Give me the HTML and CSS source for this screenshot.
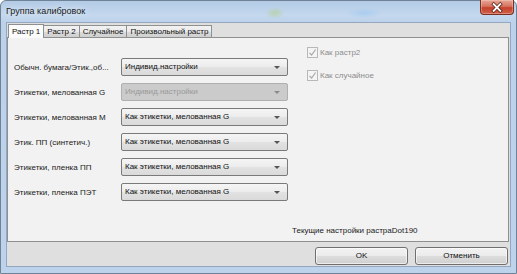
FILE: index.html
```html
<!DOCTYPE html>
<html lang="ru">
<head>
<meta charset="utf-8">
<title>Группа калибровок</title>
<link rel="stylesheet" href="styles.css">
</head>
<body>
<div class="window">
  <div class="titlebar">
    <span class="title">Группа калибровок</span>
    <div class="close">
      <svg width="34" height="15" viewBox="0 0 34 15">
        <path d="M13.5 4 L20.5 11 M20.5 4 L13.5 11" stroke="#5a1f16" stroke-width="3.6" stroke-linecap="square"/>
        <path d="M13.5 4 L20.5 11 M20.5 4 L13.5 11" stroke="#ffffff" stroke-width="2" stroke-linecap="square"/>
      </svg>
    </div>
  </div>
  <div class="client">
    <div class="tabctl">
      <div class="tabstrip">
        <div class="tab active">Растр 1</div>
        <div class="tab">Растр 2</div>
        <div class="tab">Случайное</div>
        <div class="tab">Произвольный растр</div>
      </div>
      <div class="panel">
        <div class="rows">
          <div class="row"><span class="label">Обычн. бумага/Этик.,об...</span><div class="combo">Индивид.настройки<i class="arrow"></i></div></div>
          <div class="row"><span class="label">Этикетки, мелованная G</span><div class="combo disabled">Индивид.настройки<i class="arrow"></i></div></div>
          <div class="row"><span class="label">Этикетки, мелованная M</span><div class="combo">Как этикетки, мелованная G<i class="arrow"></i></div></div>
          <div class="row"><span class="label">Этик. ПП (синтетич.)</span><div class="combo">Как этикетки, мелованная G<i class="arrow"></i></div></div>
          <div class="row"><span class="label">Этикетки, пленка ПП</span><div class="combo">Как этикетки, мелованная G<i class="arrow"></i></div></div>
          <div class="row"><span class="label">Этикетки, пленка ПЭТ</span><div class="combo">Как этикетки, мелованная G<i class="arrow"></i></div></div>
        </div>
        <div class="side">
          <div class="checks">
            <label class="check"><span class="box"><svg width="9" height="9" viewBox="0 0 9 9"><path d="M1.5 4.8 L3.6 7 L7.6 1.5" fill="none" stroke="#a9a9a9" stroke-width="1.2"/></svg></span>Как растр2</label>
            <label class="check"><span class="box"><svg width="9" height="9" viewBox="0 0 9 9"><path d="M1.5 4.8 L3.6 7 L7.6 1.5" fill="none" stroke="#a9a9a9" stroke-width="1.2"/></svg></span>Как случайное</label>
          </div>
          <div class="current">Текущие настройки растраDot190</div>
        </div>
      </div>
    </div>
    <div class="buttons">
      <div class="btn">OK</div>
      <div class="btn">Отменить</div>
    </div>
  </div>
</div>
</body>
</html>
```
FILE: styles.css
```css
* { box-sizing: border-box; }
html, body { margin: 0; padding: 0; }
body {
  width: 517px;
  height: 274px;
  overflow: hidden;
  background: #ffffff;
  font-family: "Liberation Sans", Arial, sans-serif;
}
.window {
  width: 517px;
  height: 274px;
  display: flex;
  flex-direction: column;
  border: 1px solid #6f8296;
  border-radius: 6px 6px 0 0;
  background:
    radial-gradient(ellipse 10px 6px at 274px 12px, rgba(175,205,120,0.5), rgba(175,205,120,0) 100%),
    radial-gradient(ellipse 18px 5px at 363px 12px, rgba(160,200,240,0.7), rgba(160,200,240,0) 100%),
    linear-gradient(180deg, #b3cbe6 0px, #c4d8ee 14px, #bcd2ea 22px, #bdd3eb 100%);
  padding: 0 5px 6px 5px;
}
.titlebar {
  height: 21px;
  display: flex;
  align-items: flex-start;
  justify-content: space-between;
}
.title {
  font-size: 9px;
  color: #1b1b1b;
  padding: 5px 0 0 0;
  text-shadow: 0 0 6px rgba(255,255,255,0.9);
}
.close {
  width: 34px;
  height: 15px;
  margin-right: -3px;
  margin-top: -1px;
  border: 1px solid #7a2f24;
  border-top: none;
  border-radius: 0 0 4px 4px;
  background: linear-gradient(180deg, #e6a898 0%, #d7735f 45%, #c4412c 55%, #d2614a 100%);
  box-shadow: inset 0 0 0 1px rgba(255,220,210,0.35);
  display: flex;
}
.client {
  flex: 1;
  display: flex;
  flex-direction: column;
  background: #dfdfdf;
  border: 1px solid #93a7bf;
}
.tabctl {
  display: flex;
  flex-direction: column;
  padding: 0 1px 0 0;
}
.tabstrip {
  height: 14px;
  display: flex;
  align-items: flex-end;
  padding-left: 1px;
  position: relative;
  z-index: 1;
}
.tab {
  height: 12px;
  font-size: 8px;
  color: #111;
  padding: 0 3px;
  line-height: 11px;
  border: 1px solid #8e8f8f;
  border-bottom: none;
  border-left: none;
  background: linear-gradient(180deg, #f2f2f2 0%, #ebebeb 50%, #dcdcdc 51%, #cfcfcf 100%);
}
.tab.active {
  height: 14px;
  background: #fbfbfb;
  border-left: 1px solid #8e8f8f;
  margin-bottom: -1px;
  line-height: 13px;
}
.panel {
  height: 205px;
  background: #f2f2f2;
  border: 1px solid #8e8f8f;
  display: flex;
  padding: 20px 0 6px 6px;
}
.rows {
  display: flex;
  flex-direction: column;
  gap: 7px;
  width: 278px;
}
.row {
  display: flex;
  align-items: center;
  height: 18px;
}
.label {
  width: 107px;
  font-size: 8px;
  color: #1a1a1a;
  white-space: nowrap;
}
.combo {
  width: 167px;
  height: 18px;
  border: 1px solid #7a7a7a;
  border-radius: 2px;
  background: linear-gradient(180deg, #f5f5f5 0%, #ececec 50%, #e2e2e2 51%, #dadada 100%);
  font-size: 8px;
  color: #111;
  line-height: 16px;
  padding-left: 3px;
  position: relative;
}
.combo.disabled {
  background: #cbcbcb;
  border-color: #b0b0b0;
  color: #9a9a9a;
}
.arrow {
  position: absolute;
  right: 7px;
  top: 7px;
  width: 0;
  height: 0;
  border-left: 3px solid transparent;
  border-right: 3px solid transparent;
  border-top: 3px solid #555;
}
.combo.disabled .arrow { border-top-color: #8a8a8a; }
.side {
  flex: 1;
  display: flex;
  flex-direction: column;
  justify-content: space-between;
}
.checks {
  display: flex;
  flex-direction: column;
  gap: 12px;
  margin-top: -11px;
  padding-left: 15px;
}
.check {
  display: flex;
  align-items: center;
  gap: 2px;
  font-size: 8px;
  color: #8c8c8c;
  height: 11px;
}
.box {
  width: 11px;
  height: 11px;
  border: 1px solid #b8b8b8;
  background: #f4f4f4;
  display: flex;
  align-items: center;
  justify-content: center;
}
.current {
  font-size: 8px;
  color: #1a1a1a;
}
.buttons {
  flex: 1;
  display: flex;
  justify-content: flex-end;
  align-items: flex-start;
  gap: 7px;
  padding: 5px 2px 0 0;
}
.btn {
  width: 93px;
  height: 18px;
  border: 1px solid #707070;
  border-radius: 3px;
  background: linear-gradient(180deg, #f2f2f2 0%, #ebebeb 50%, #dddddd 51%, #cfcfcf 100%);
  box-shadow: inset 0 0 0 1px rgba(255,255,255,0.6);
  font-size: 8px;
  color: #111;
  text-align: center;
  line-height: 16px;
}
```
